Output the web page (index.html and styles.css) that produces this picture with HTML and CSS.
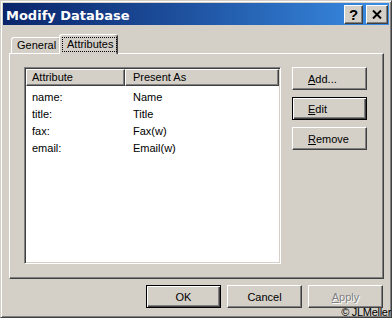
FILE: index.html
```html
<!DOCTYPE html>
<html>
<head>
<meta charset="utf-8">
<link rel="stylesheet" href="styles.css">
</head>
<body>
<div class="window">
  <div class="titlebar">
    <span class="title">Modify Database</span>
    <button class="tbtn tbtn-help">?</button>
    <button class="tbtn tbtn-close"><svg width="10" height="9" viewBox="0 0 10 9"><path d="M1 0.5 L9 8.5 M9 0.5 L1 8.5" stroke="#000" stroke-width="2"/></svg></button>
  </div>
  <div class="content">
    <div class="tabs">
      <div class="tab">General</div>
      <div class="tab tab-active"><span class="focus">Attributes</span></div>
    </div>
    <div class="panel">
      <div class="list">
        <div class="list-head">
          <div class="hcell hcell-1">Attribute</div>
          <div class="hcell hcell-2">Present As</div>
        </div>
        <div class="rows">
          <div class="row"><span class="c1">name:</span><span class="c2">Name</span></div>
          <div class="row"><span class="c1">title:</span><span class="c2">Title</span></div>
          <div class="row"><span class="c1">fax:</span><span class="c2">Fax(w)</span></div>
          <div class="row"><span class="c1">email:</span><span class="c2">Email(w)</span></div>
        </div>
      </div>
      <div class="side">
        <button class="btn btn-left"><u>A</u>dd...</button>
        <button class="btn btn-left btn-default"><u>E</u>dit</button>
        <button class="btn btn-left"><u>R</u>emove</button>
      </div>
    </div>
    <div class="footer">
      <button class="btn btn-default">OK</button>
      <button class="btn">Cancel</button>
      <button class="btn btn-disabled"><u>A</u>pply</button>
    </div>
  </div>
  <div class="watermark">© JLMeller</div>
</div>
</body>
</html>
```
FILE: styles.css
```css
* { box-sizing: border-box; }
html, body { margin: 0; padding: 0; }
body {
  width: 392px;
  height: 318px;
  overflow: hidden;
  background: #d4d0c8;
  font-family: "Liberation Sans", Arial, sans-serif;
  font-size: 11px;
  color: #000;
}
.window {
  position: relative;
  width: 392px;
  height: 318px;
  border: 1px solid;
  border-color: #d4d0c8 #404040 #404040 #d4d0c8;
  box-shadow: inset 1px 1px #fff, inset -1px -1px #808080;
  padding: 2px;
  display: flex;
  flex-direction: column;
}
.titlebar {
  height: 22px;
  display: flex;
  align-items: center;
  padding: 0 1px 0 3px;
  background: linear-gradient(to right, #0a246a 0%, #1d4f9c 45%, #3a8ee6 100%);
}
.title {
  flex: 1;
  color: #fff;
  font-family: "DejaVu Sans", sans-serif;
  font-weight: bold;
  font-size: 13px;
  padding-top: 2px;
}
.tbtn {
  height: 19px;
  margin: 0;
  padding: 0;
  background: #d4d0c8;
  border: 1px solid;
  border-color: #fff #404040 #404040 #fff;
  box-shadow: inset -1px -1px #808080;
  display: flex;
  align-items: center;
  justify-content: center;
}
.tbtn-help {
  width: 19px;
  font-family: "Liberation Sans", Arial, sans-serif;
  font-weight: bold;
  font-size: 15px;
  line-height: 1;
}
.tbtn-close {
  width: 22px;
  margin-left: 3px;
}
.content {
  flex: 1;
  padding: 9px 5px 0 6px;
  display: flex;
  flex-direction: column;
}
.tabs {
  height: 19px;
  display: flex;
  align-items: flex-end;
  padding-left: 2px;
}
.tab {
  height: 16px;
  width: 50px;
  padding-left: 5px;
  line-height: 14px;
  border-top: 1px solid #fff;
  border-left: 1px solid #fff;
  border-right: 1px solid #404040;
  box-shadow: inset -1px 0 #808080;
  border-radius: 3px 3px 0 0;
  background: #d4d0c8;
}
.tab-active {
  position: relative;
  z-index: 1;
  width: 59px;
  height: 20px;
  margin-left: -2px;
  margin-bottom: -1px;
  padding: 2px 0 0 2px;
  line-height: 13px;
}
.focus {
  display: inline-block;
  border: 1px dotted #000;
  padding: 0 3px 0 4px;
  height: 15px;
}
.panel {
  height: 226px;
  display: flex;
  gap: 11px;
  padding: 13px 16px 14px 14px;
  border: 1px solid;
  border-color: #fff #404040 #404040 #fff;
  box-shadow: inset -1px -1px #808080;
}
.list {
  flex: 1;
  background: #fff;
  border: 1px solid;
  border-color: #808080 #fff #fff #808080;
  box-shadow: inset 1px 1px #404040, inset -1px -1px #d4d0c8;
  padding: 1px;
}
.list-head {
  display: flex;
  height: 17px;
}
.hcell {
  background: #d4d0c8;
  border: 1px solid;
  border-color: #fff #404040 #404040 #fff;
  box-shadow: inset -1px -1px #808080;
  line-height: 14px;
  padding-left: 5px;
}
.hcell-1 { width: 99px; }
.hcell-2 { flex: 1; padding-left: 7px; }
.rows { padding-top: 3px; }
.row {
  display: flex;
  height: 17px;
  line-height: 17px;
}
.c1 { width: 99px; padding-left: 6px; }
.c2 { padding-left: 8px; }
.side {
  width: 75px;
  display: flex;
  flex-direction: column;
  gap: 7px;
}
.btn {
  width: 75px;
  height: 23px;
  margin: 0;
  padding: 0;
  background: #d4d0c8;
  font-family: "Liberation Sans", Arial, sans-serif;
  font-size: 11px;
  color: #000;
  border: 1px solid;
  border-color: #fff #404040 #404040 #fff;
  box-shadow: inset -1px -1px #808080;
  text-align: center;
}
.btn-left { text-align: left; padding-left: 15px; }
.btn-default {
  border: 1px solid #000;
  box-shadow: inset 1px 1px #fff, inset -1px -1px #404040, inset -2px -2px #808080;
}
.btn-disabled {
  color: #808080;
  text-shadow: 1px 1px #fff;
}
.footer {
  display: flex;
  justify-content: flex-end;
  gap: 6px;
  padding: 6px 1px 0 0;
}
.watermark {
  position: absolute;
  right: 0;
  bottom: 0;
  font-size: 11px;
  line-height: 10px;
  letter-spacing: -0.3px;
  color: #000;
}
```
